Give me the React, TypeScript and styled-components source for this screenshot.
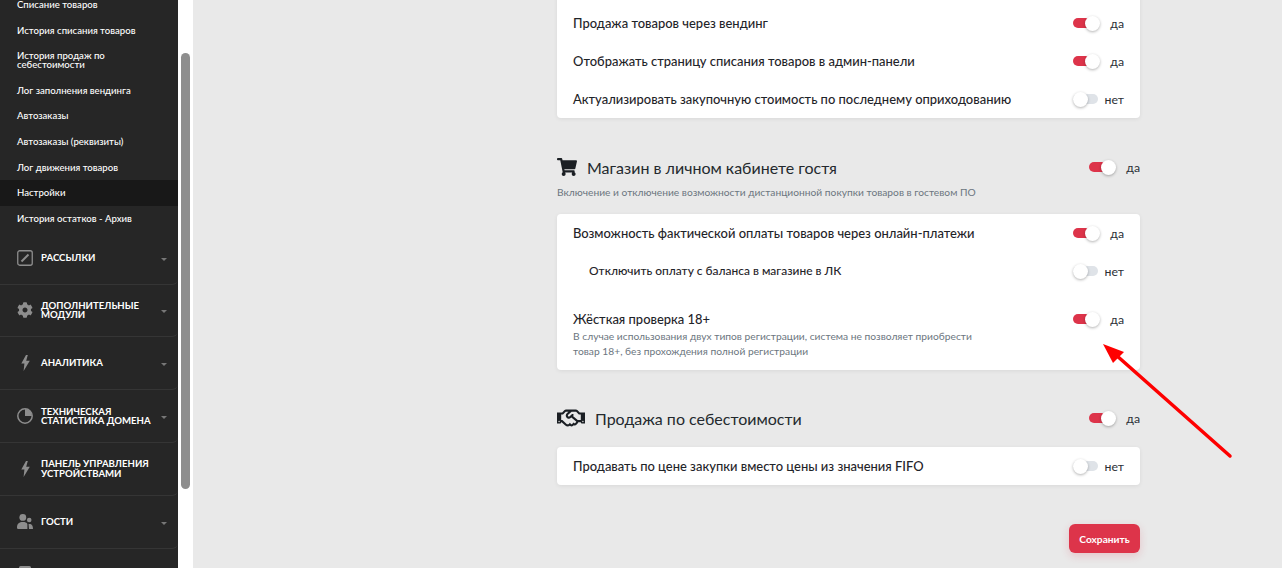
import styled, { createGlobalStyle } from "styled-components";
import { FaShoppingCart, FaRegHandshake, FaCog } from "react-icons/fa";
import type { ReactNode } from "react";

const Global = createGlobalStyle`
    html, body {
        margin: 0;
        padding: 0;
        background: #e9e9e9;
    }
    * {
        box-sizing: border-box;
    }
`;

const Page = styled.div`
    position: relative;
    display: flex;
    width: 1282px;
    height: 568px;
    overflow: hidden;
    font-family: Lato, "Liberation Sans", sans-serif;
    background: #e9e9e9;
`;

const Sidebar = styled.aside`
    width: 178px;
    height: 568px;
    flex-shrink: 0;
    overflow: hidden;
    background: #262626;
    color: #fff;
`;

const SubList = styled.div`
    display: flex;
    flex-direction: column;
    margin-top: -8px;
    padding-bottom: 0.5px;
`;

const SubItem = styled.div<{ $active?: boolean }>`
    display: flex;
    align-items: center;
    min-height: 25.6px;
    padding: 0 17px;
    font-size: 9.6px;
    line-height: 9.5px;
    font-weight: 500;
    background: ${(p) => (p.$active ? "#181818" : "transparent")};
`;

const TallSubItem = styled(SubItem)`
    min-height: 34.5px;
`;

const Group = styled.div`
    display: flex;
    align-items: center;
    height: 52.8px;
    padding: 0 11px 0 17px;
    border-bottom: 1px solid #353535;
    border-bottom-right-radius: 6px;
`;

const GroupIcon = styled.div`
    display: flex;
    justify-content: center;
    width: 16px;
    margin-right: 8px;
    flex-shrink: 0;
    color: #8d8d8d;
`;

const GroupLabel = styled.div`
    flex: 1;
    font-size: 9.6px;
    line-height: 9.5px;
    font-weight: 700;
    text-transform: uppercase;
`;

const Caret = styled.div`
    width: 0;
    height: 0;
    margin-top: 3px;
    border-left: 3.5px solid transparent;
    border-right: 3.5px solid transparent;
    border-top: 3.5px solid #777;
`;

const Track = styled.div`
    width: 15px;
    height: 568px;
    flex-shrink: 0;
    padding: 53px 3px 0;
    background: #fff;
`;

const Thumb = styled.div`
    width: 9px;
    height: 436px;
    border-radius: 5px;
    background: #8e8e8e;
`;

const Main = styled.main`
    flex: 1;
    display: flex;
    justify-content: flex-end;
    padding-right: 142px;
`;

const Column = styled.div`
    display: flex;
    flex-direction: column;
    width: 583px;
    margin-top: -34px;
`;

const Card = styled.section`
    display: flex;
    flex-direction: column;
    padding: 0 16px;
    border-radius: 4px;
    background: #fff;
    box-shadow: 0 1px 4px rgba(0, 0, 0, 0.07);
`;

const Row = styled.div<{ $indent?: boolean }>`
    display: flex;
    align-items: center;
    justify-content: space-between;
    height: 38px;
    padding-left: ${(p) => (p.$indent ? "16px" : "0")};
`;

const TallRow = styled.div`
    display: flex;
    justify-content: space-between;
    height: 80px;
    padding-top: 21px;
`;

const RowLabel = styled.div<{ $small?: boolean }>`
    font-size: ${(p) => (p.$small ? "11.95px" : "12.95px")};
    line-height: 16px;
    font-weight: 500;
    color: #1f2429;
`;

const RowHint = styled.div`
    width: 410px;
    margin-top: 2px;
    font-size: 10.25px;
    line-height: 15px;
    color: #6c7680;
`;

const SectionHead = styled.div<{ $before: number; $after?: number }>`
    display: flex;
    align-items: center;
    height: 30px;
    margin-top: ${(p) => p.$before}px;
    margin-bottom: ${(p) => p.$after ?? 0}px;
`;

const SectionIcon = styled.div<{ $w: number }>`
    display: flex;
    align-items: center;
    width: ${(p) => p.$w}px;
    color: #1b1f24;
`;

const SectionTitle = styled.h2`
    flex: 1;
    margin: 0;
    font-size: 16px;
    font-weight: 400;
    color: #24292e;
`;

const SectionHint = styled.div`
    margin: 3px 0 15px;
    font-size: 10.22px;
    line-height: 14px;
    color: #6c7680;
`;

const ToggleWrap = styled.div<{ $top?: boolean }>`
    display: flex;
    align-items: center;
    align-self: ${(p) => (p.$top ? "flex-start" : "center")};
    height: ${(p) => (p.$top ? "16px" : "auto")};
    width: 51px;
    flex-shrink: 0;
`;

const Switch = styled.div<{ $on: boolean }>`
    position: relative;
    width: 25px;
    height: 10px;
    border-radius: 5px;
    background: ${(p) => (p.$on ? "#dd344a" : "#dfe3e8")};
`;

const Knob = styled.div<{ $on: boolean }>`
    position: absolute;
    top: -2.5px;
    left: ${(p) => (p.$on ? "12px" : "0")};
    width: 15px;
    height: 15px;
    border-radius: 50%;
    background: #fff;
    box-shadow: 0 1px 3px rgba(0, 0, 0, 0.3);
`;

const ToggleText = styled.span`
    margin-left: auto;
    font-size: 12.3px;
    color: #2b3036;
`;

const Footer = styled.div`
    display: flex;
    justify-content: flex-end;
    margin-top: 39px;
`;

const SaveButton = styled.button`
    width: 71px;
    height: 29px;
    padding: 0;
    border: 0;
    border-radius: 6px;
    background: #dd344a;
    color: #fff;
    font-family: inherit;
    font-size: 10.2px;
    font-weight: 700;
    box-shadow: 0 3px 8px rgba(221, 52, 74, 0.2);
`;

const Arrow = styled.svg`
    position: absolute;
    left: 1090px;
    top: 335px;
`;

function Toggle({ on, top }: { on: boolean; top?: boolean }) {
    return (
        <ToggleWrap $top={top}>
            <Switch $on={on}>
                <Knob $on={on} />
            </Switch>
            <ToggleText>{on ? "да" : "нет"}</ToggleText>
        </ToggleWrap>
    );
}

function SideGroup({ icon, caret = true, children }: { icon: ReactNode; caret?: boolean; children?: ReactNode }) {
    return (
        <Group>
            <GroupIcon>{icon}</GroupIcon>
            <GroupLabel>{children}</GroupLabel>
            {caret && <Caret />}
        </Group>
    );
}

const SquareIcon = () => (
    <svg width="16" height="16" viewBox="0 0 16 16" fill="none" stroke="currentColor">
        <rect x="0.75" y="0.75" width="14.5" height="14.5" rx="2" strokeWidth="1.3" />
        <path d="M4.5 11.5 L11.5 4.5" strokeWidth="2" />
    </svg>
);

const PieIcon = () => (
    <svg width="16" height="16" viewBox="0 0 16 16" fill="none" stroke="currentColor">
        <circle cx="8" cy="8" r="7.2" strokeWidth="1.5" />
        <path d="M8 8 V1 A7 7 0 0 1 15 8 Z" fill="currentColor" stroke="none" />
    </svg>
);

const BoltIcon = () => (
    <svg width="9" height="16" viewBox="0 0 9 16" fill="currentColor">
        <path d="M5 0 L0.3 8.6 H3.4 L2.6 16 L8.8 5.8 H5.2 L6.8 0 Z" />
    </svg>
);

const GuestsIcon = () => (
    <svg width="16" height="16" viewBox="0 0 16 16" fill="currentColor">
        <circle cx="5.8" cy="3.4" r="3.4" />
        <path d="M0 13.4 C0 9.4 2.4 8 5.8 8 C8.2 8 9.6 8.6 10.4 10 V15 H1.6 C0.6 15 0 14.4 0 13.4 Z" />
        <circle cx="12.2" cy="6" r="2.3" />
        <path d="M11.6 10 H13.4 C14.8 10.2 16 12 16 15 H12 Z" />
    </svg>
);

const ListIcon = () => (
    <svg width="12" height="16" viewBox="0 0 12 16" fill="currentColor">
        <rect width="12" height="16" rx="1.5" />
    </svg>
);

export default function App() {
    return (
        <Page>
            <Global />
            <Sidebar>
                <SubList>
                    <SubItem>Списание товаров</SubItem>
                    <SubItem>История списания товаров</SubItem>
                    <TallSubItem>История продаж по себестоимости</TallSubItem>
                    <SubItem>Лог заполнения вендинга</SubItem>
                    <SubItem>Автозаказы</SubItem>
                    <SubItem>Автозаказы (реквизиты)</SubItem>
                    <SubItem>Лог движения товаров</SubItem>
                    <SubItem $active>Настройки</SubItem>
                    <SubItem>История остатков - Архив</SubItem>
                </SubList>
                <SideGroup icon={<SquareIcon />}>Рассылки</SideGroup>
                <SideGroup icon={<FaCog size={16} />}>Дополнительные модули</SideGroup>
                <SideGroup icon={<BoltIcon />}>Аналитика</SideGroup>
                <SideGroup icon={<PieIcon />}>Техническая статистика домена</SideGroup>
                <SideGroup icon={<BoltIcon />} caret={false}>Панель управления устройствами</SideGroup>
                <SideGroup icon={<GuestsIcon />}>Гости</SideGroup>
                <SideGroup icon={<ListIcon />} caret={false} />
            </Sidebar>
            <Track>
                <Thumb />
            </Track>
            <Main>
                <Column>
                    <Card>
                        <Row />
                        <Row>
                            <RowLabel>Продажа товаров через вендинг</RowLabel>
                            <Toggle on />
                        </Row>
                        <Row>
                            <RowLabel>Отображать страницу списания товаров в админ-панели</RowLabel>
                            <Toggle on />
                        </Row>
                        <Row>
                            <RowLabel>Актуализировать закупочную стоимость по последнему оприходованию</RowLabel>
                            <Toggle on={false} />
                        </Row>
                    </Card>

                    <SectionHead $before={34}>
                        <SectionIcon $w={30}>
                            <FaShoppingCart size={20} />
                        </SectionIcon>
                        <SectionTitle>Магазин в личном кабинете гостя</SectionTitle>
                        <Toggle on />
                    </SectionHead>
                    <SectionHint>Включение и отключение возможности дистанционной покупки товаров в гостевом ПО</SectionHint>
                    <Card>
                        <Row>
                            <RowLabel>Возможность фактической оплаты товаров через онлайн-платежи</RowLabel>
                            <Toggle on />
                        </Row>
                        <Row $indent>
                            <RowLabel $small>Отключить оплату с баланса в магазине в ЛК</RowLabel>
                            <Toggle on={false} />
                        </Row>
                        <TallRow>
                            <div>
                                <RowLabel>Жёсткая проверка 18+</RowLabel>
                                <RowHint>
                                    В случае использования двух типов регистрации, система не позволяет приобрести товар 18+, без прохождения полной регистрации
                                </RowHint>
                            </div>
                            <Toggle on top />
                        </TallRow>
                    </Card>

                    <SectionHead $before={33} $after={14}>
                        <SectionIcon $w={38}>
                            <FaRegHandshake size={28} />
                        </SectionIcon>
                        <SectionTitle>Продажа по себестоимости</SectionTitle>
                        <Toggle on />
                    </SectionHead>
                    <Card>
                        <Row>
                            <RowLabel>Продавать по цене закупки вместо цены из значения FIFO</RowLabel>
                            <Toggle on={false} />
                        </Row>
                    </Card>

                    <Footer>
                        <SaveButton>Сохранить</SaveButton>
                    </Footer>
                </Column>
            </Main>
            <Arrow width="150" height="130" viewBox="0 0 150 130">
                <path d="M140 121 L26 20" stroke="#fe0000" strokeWidth="3.5" strokeLinecap="round" />
                <path d="M13 9 L34 17 L23 28 Z" fill="#fe0000" />
            </Arrow>
        </Page>
    );
}
